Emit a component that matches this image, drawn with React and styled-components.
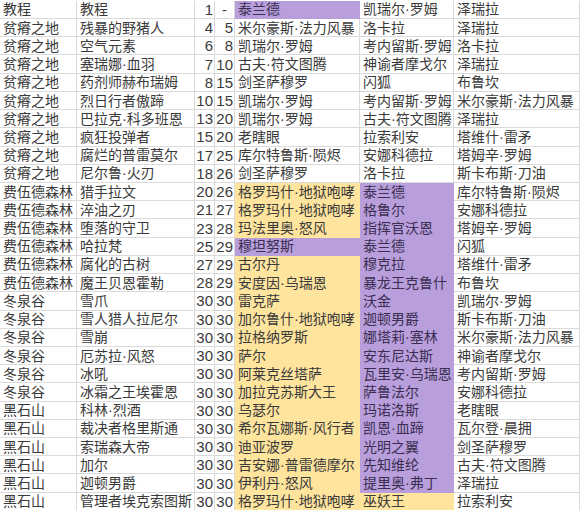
import React from 'react';
import styled, { createGlobalStyle } from 'styled-components';

const GlobalStyle = createGlobalStyle`
  html, body {
    margin: 0;
    padding: 0;
    background: #ffffff;
  }
`;

const FILLS = {
  yellow: '#ffe49e',
  purple: '#b89fdc',
};

const Sheet = styled.div`
  display: grid;
  grid-template-columns: 77px 118px 20px 20px 125px 94px 126px;
  grid-auto-rows: 18.22px;
  width: 580px;
  height: 510px;
  overflow: hidden;
  padding-top: 0.8px;
  box-sizing: border-box;
  font-family: "Liberation Sans", "Noto Sans CJK SC", sans-serif;
  font-size: 14px;
  color: #3a3a3a;
  background: #ffffff;
`;

const Cell = styled.div`
  display: flex;
  align-items: center;
  justify-content: ${({ $align }) => ($align === 'right' ? 'flex-end' : $align === 'center' ? 'center' : 'flex-start')};
  padding: 0 ${({ $align }) => ($align === 'right' ? '1px' : '0')} 0 ${({ $align }) => ($align === 'left' ? '3px' : '0')};
  box-sizing: border-box;
  white-space: nowrap;
  overflow: hidden;
  line-height: 1;
  font-size: ${({ $num }) => ($num ? '15px' : '14px')};
  background: ${({ $fill }) => ($fill ? FILLS[$fill] : '#ffffff')};
  border-right: 1px solid ${({ $fill }) => ($fill ? FILLS[$fill] : '#dadada')};
  border-bottom: 1px solid ${({ $fill }) => ($fill ? FILLS[$fill] : '#dadada')};
  color: ${({ $fill }) => ($fill === 'purple' ? '#3b2e52' : '#3a3a3a')};
`;

// region, stage, lvl from, lvl to, [name, fill], [name, fill], name
const rows = [
  ['教程', '教程', '1', '-', ['泰兰德', 'purple'], ['凯瑞尔·罗姆'], '泽瑞拉'],
  ['贫瘠之地', '残暴的野猪人', '4', '5', ['米尔豪斯·法力风暴'], ['洛卡拉'], '泽瑞拉'],
  ['贫瘠之地', '空气元素', '6', '8', ['凯瑞尔·罗姆'], ['考内留斯·罗姆'], '洛卡拉'],
  ['贫瘠之地', '塞瑞娜·血羽', '7', '10', ['古夫·符文图腾'], ['神谕者摩戈尔'], '泽瑞拉'],
  ['贫瘠之地', '药剂师赫布瑞姆', '8', '15', ['剑圣萨穆罗'], ['闪狐'], '布鲁坎'],
  ['贫瘠之地', '烈日行者傲蹄', '10', '15', ['凯瑞尔·罗姆'], ['考内留斯·罗姆'], '米尔豪斯·法力风暴'],
  ['贫瘠之地', '巴拉克·科多班恩', '13', '20', ['凯瑞尔·罗姆'], ['古夫·符文图腾'], '泽瑞拉'],
  ['贫瘠之地', '疯狂投弹者', '15', '20', ['老瞎眼'], ['拉索利安'], '塔维什·雷矛'],
  ['贫瘠之地', '腐烂的普雷莫尔', '17', '25', ['库尔特鲁斯·陨烬'], ['安娜科德拉'], '塔姆辛·罗姆'],
  ['贫瘠之地', '尼尔鲁·火刃', '18', '26', ['剑圣萨穆罗'], ['洛卡拉'], '斯卡布斯·刀油'],
  ['费伍德森林', '猎手拉文', '20', '26', ['格罗玛什·地狱咆哮', 'yellow'], ['泰兰德', 'purple'], '库尔特鲁斯·陨烬'],
  ['费伍德森林', '淬油之刃', '21', '27', ['格罗玛什·地狱咆哮', 'yellow'], ['格鲁尔', 'purple'], '安娜科德拉'],
  ['费伍德森林', '堕落的守卫', '23', '28', ['玛法里奥·怒风', 'yellow'], ['指挥官沃恩', 'purple'], '塔姆辛·罗姆'],
  ['费伍德森林', '哈拉梵', '25', '29', ['穆坦努斯', 'purple'], ['泰兰德', 'purple'], '闪狐'],
  ['费伍德森林', '腐化的古树', '27', '29', ['古尔丹', 'yellow'], ['穆克拉', 'purple'], '塔维什·雷矛'],
  ['费伍德森林', '魔王贝恩霍勒', '28', '29', ['安度因·乌瑞恩', 'yellow'], ['暴龙王克鲁什', 'purple'], '布鲁坎'],
  ['冬泉谷', '雪爪', '30', '30', ['雷克萨', 'yellow'], ['沃金', 'purple'], '凯瑞尔·罗姆'],
  ['冬泉谷', '雪人猎人拉尼尔', '30', '30', ['加尔鲁什·地狱咆哮', 'yellow'], ['迦顿男爵', 'purple'], '斯卡布斯·刀油'],
  ['冬泉谷', '雪崩', '30', '30', ['拉格纳罗斯', 'yellow'], ['娜塔莉·塞林', 'purple'], '米尔豪斯·法力风暴'],
  ['冬泉谷', '厄苏拉·风怒', '30', '30', ['萨尔', 'yellow'], ['安东尼达斯', 'purple'], '神谕者摩戈尔'],
  ['冬泉谷', '冰吼', '30', '30', ['阿莱克丝塔萨', 'yellow'], ['瓦里安·乌瑞恩', 'purple'], '考内留斯·罗姆'],
  ['冬泉谷', '冰霜之王埃霍恩', '30', '30', ['加拉克苏斯大王', 'yellow'], ['萨鲁法尔', 'purple'], '安娜科德拉'],
  ['黑石山', '科林·烈酒', '30', '30', ['乌瑟尔', 'yellow'], ['玛诺洛斯', 'purple'], '老瞎眼'],
  ['黑石山', '裁决者格里斯通', '30', '30', ['希尔瓦娜斯·风行者', 'yellow'], ['凯恩·血蹄', 'purple'], '瓦尔登·晨拥'],
  ['黑石山', '索瑞森大帝', '30', '30', ['迪亚波罗', 'yellow'], ['光明之翼', 'purple'], '剑圣萨穆罗'],
  ['黑石山', '加尔', '30', '30', ['吉安娜·普雷德摩尔', 'yellow'], ['先知维纶', 'purple'], '古夫·符文图腾'],
  ['黑石山', '迦顿男爵', '30', '30', ['伊利丹·怒风', 'yellow'], ['提里奥·弗丁', 'purple'], '泽瑞拉'],
  ['黑石山', '管理者埃克索图斯', '30', '30', ['格罗玛什·地狱咆哮', 'yellow'], ['巫妖王', 'yellow'], '拉索利安'],
];

const App = () => (
  <>
    <GlobalStyle />
    <Sheet>
      {rows.map(([region, stage, from, to, [hero1, fill1], [hero2, fill2], hero3], i) => (
        <React.Fragment key={i}>
          <Cell $align="left">{region}</Cell>
          <Cell $align="left">{stage}</Cell>
          <Cell $align="right" $num>{from}</Cell>
          <Cell $align={to === '-' ? 'center' : 'right'} $num>{to}</Cell>
          <Cell $align="left" $fill={fill1}>{hero1}</Cell>
          <Cell $align="left" $fill={fill2}>{hero2}</Cell>
          <Cell $align="left">{hero3}</Cell>
        </React.Fragment>
      ))}
    </Sheet>
  </>
);

export default App;
